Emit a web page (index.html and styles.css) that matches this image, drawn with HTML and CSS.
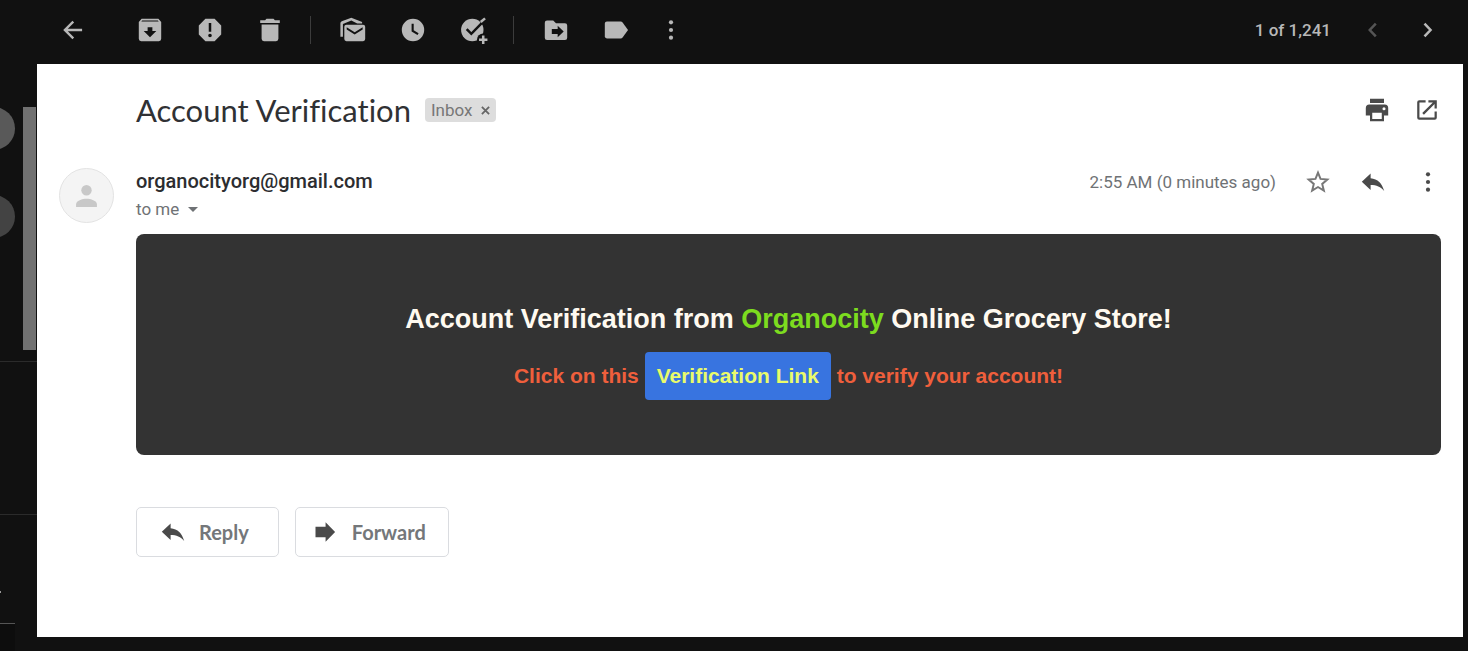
FILE: index.html
```html
<!DOCTYPE html>
<html lang="en">
<head>
<meta charset="utf-8">
<title>Account Verification</title>
<link rel="stylesheet" href="styles.css">
</head>
<body>
<div class="app">
  <header class="toolbar">
    <button class="tool tool-back" aria-label="Back"><svg class="icon" viewBox="0 0 20 20"><path d="M16.500 9.100H6.300l4.500-4.500-1.200-1.200L3 10l6.600 6.600 1.200-1.200-4.500-4.500h10.200z"/></svg></button>
    <button class="tool" aria-label="Archive"><svg class="icon" viewBox="0 0 20 20"><path fill-rule="evenodd" d="M4 2h12l2 2.200V16.300a1.700 1.700 0 0 1-1.700 1.700H3.700A1.700 1.700 0 0 1 2 16.300V4.200zM4.400 3.200L3.800 4h12.400l-.6-.8zM8.300 8v2.800H5.500l4.500 4.400 4.500-4.400h-2.800V8z"/></svg></button>
    <button class="tool" aria-label="Report spam"><svg class="icon" viewBox="0 0 20 20"><path fill-rule="evenodd" d="M6.700 2h6.600L18 6.700v6.600L13.300 18H6.700L2 13.300V6.700zM9.100 5v6.200h1.800V5zM10 12.600a1.300 1.300 0 1 0 0 2.600 1.300 1.300 0 0 0 0-2.600z"/></svg></button>
    <button class="tool" aria-label="Delete"><svg class="icon" viewBox="0 0 20 20"><path d="M7.500 2h5l1 1H17v2H3V3h3.500zM4 6h12v10.300a1.700 1.700 0 0 1-1.700 1.700H5.700A1.700 1.700 0 0 1 4 16.300z"/></svg></button>
    <span class="divider"></span>
    <button class="tool" aria-label="Mark as unread"><svg class="icon" viewBox="0 0 20 20"><path d="M1 14.800V5.500c0-.8.300-1.300 1-1.700l6.800-2.600 7.700 3v1.200H13L8.800 3.200 2.800 5.700v9.100z"/><path fill-rule="evenodd" d="M5.300 6.200h11.900a1.500 1.500 0 0 1 1.500 1.500v8.800a1.500 1.500 0 0 1-1.500 1.500H5.300a1.500 1.500 0 0 1-1.500-1.500V7.700a1.500 1.500 0 0 1 1.500-1.500zM5.500 8v1.700l5.700 3.500 5.700-3.500V8l-5.700 3.600z"/></svg></button>
    <button class="tool" aria-label="Snooze"><svg class="icon" viewBox="0 0 20 20"><path fill-rule="evenodd" d="M10 2a8 8 0 1 0 0 16 8 8 0 0 0 0-16zM9 5.500h1.500v4.700l3.500 2.100-.8 1.300L9 11z"/></svg></button>
    <button class="tool" aria-label="Add to tasks"><svg class="icon" viewBox="0 0 20 20"><circle cx="9.500" cy="10" r="8"/><path class="cut" d="M5.500 9.300l3.300 3.400 9-9.200"/><path class="stroke" d="M15.500 4.300l3.100-2.600"/><circle class="hole" cx="17.300" cy="17" r="4.500"/><path d="M16.400 14h1.800v2.100h2.100v1.800h-2.100V20h-1.800v-2.100h-2.100v-1.800h2.100z"/></svg></button>
    <span class="divider"></span>
    <button class="tool" aria-label="Move to"><svg class="icon" viewBox="0 0 20 20"><path fill-rule="evenodd" d="M3.600 3.200H8l2 2h6.400A1.600 1.600 0 0 1 18 6.800v8.700a1.600 1.600 0 0 1-1.600 1.600H3.600A1.600 1.600 0 0 1 2 15.500V4.800a1.600 1.600 0 0 1 1.600-1.600zM7 9.300v3.600h4.200v2.300l4.300-4.100L11.200 7v2.300z"/></svg></button>
    <button class="tool" aria-label="Labels"><svg class="icon" viewBox="0 0 20 20"><path d="M3.500 4h9.800c.6 0 1.100.3 1.400.7L18.600 10l-3.900 5.300c-.3.400-.8.700-1.400.7H3.500A1.500 1.500 0 0 1 2 14.500v-9A1.500 1.500 0 0 1 3.500 4z"/></svg></button>
    <button class="tool tool-more" aria-label="More"><svg class="icon" viewBox="0 0 20 20"><circle cx="10" cy="4.500" r="1.500"/><circle cx="10" cy="10" r="1.500"/><circle cx="10" cy="15.500" r="1.500"/></svg></button>
    <span class="count">1 of 1,241</span>
    <button class="tool tool-page" aria-label="Newer" disabled><svg class="icon" viewBox="0 0 20 20"><path class="stroke" d="M12 5.500L7.700 10l4.300 4.500"/></svg></button>
    <button class="tool tool-page" aria-label="Older"><svg class="icon" viewBox="0 0 20 20"><path class="stroke" d="M7.500 5.500l4.300 4.500-4.300 4.500"/></svg></button>
  </header>

  <aside class="rail">
    <div class="rail-chats">
      <div class="contacts"><span class="contact"></span><span class="contact contact-dim"></span></div>
      <div class="scrollbar"></div>
    </div>
    <div class="rail-section"></div>
    <div class="rail-footer"><span class="speck"></span></div>
    <div class="rail-tab"></div>
  </aside>

  <main class="mail">
    <div class="subject-row">
      <h1 class="subject">Account Verification</h1>
      <span class="chip">Inbox <button class="chip-close" aria-label="Remove label Inbox"><svg viewBox="0 0 10 10"><path d="M1 1l8 8M9 1L1 9"/></svg></button></span>
      <div class="actions">
        <button class="action" aria-label="Print"><svg class="icon" viewBox="0 0 20 20"><path fill-rule="evenodd" d="M5 2h10v3H5zM4.500 6h11A2.500 2.500 0 0 1 18 8.500V14h-3v4H5v-4H2V8.500A2.500 2.500 0 0 1 4.500 6zM6.600 12v4.400h6.800V12zM15 8a1.100 1.100 0 1 0 0 2.200A1.100 1.100 0 0 0 15 8z"/></svg></button>
        <button class="action" aria-label="Open in new window"><svg class="icon" viewBox="0 0 20 20"><path d="M9 3v1.600H4.600v10.800h10.800V11H17v4.500a1.500 1.500 0 0 1-1.500 1.500h-11A1.500 1.500 0 0 1 3 15.500v-11A1.500 1.500 0 0 1 4.500 3zM11 3h6v6h-1.600V5.800l-7.600 7.600-1.200-1.200 7.600-7.600H11z"/></svg></button>
      </div>
    </div>

    <div class="message">
      <div class="avatar"><svg viewBox="0 0 24 24"><circle cx="12" cy="7" r="5"/><path d="M2 23v-2.500C2 17 8 15.200 12 15.200S22 17 22 20.500V23z"/></svg></div>
      <div class="message-main">
        <div class="message-head">
          <div class="from">
            <h2 class="sender">organocityorg@gmail.com</h2>
            <button class="recipient">to me <svg viewBox="0 0 10 5"><path d="M0 0h10L5 5z"/></svg></button>
          </div>
          <div class="meta">
            <span class="time">2:55 AM (0 minutes ago)</span>
            <button class="action" aria-label="Star"><svg class="icon star" viewBox="0 0 20 20"><path d="M10 3.300l1.800 4.500 4.900.4-3.700 3.200 1.200 4.800-4.200-2.600-4.200 2.600L7 11.400 3.300 8.200l4.900-.4z"/></svg></button>
            <button class="action" aria-label="Reply"><svg class="icon" viewBox="0 0 20 20"><path d="M8.300 4v3.300c5 .5 8.300 3.700 9.700 9.200-2.500-3-5.500-4.300-9.700-4.300v3.600L2 9.900z"/></svg></button>
            <button class="action" aria-label="More"><svg class="icon" viewBox="0 0 20 20"><circle cx="10" cy="4.500" r="1.500"/><circle cx="10" cy="10" r="1.500"/><circle cx="10" cy="15.500" r="1.500"/></svg></button>
          </div>
        </div>
        <section class="banner">
          <h3 class="banner-title">Account Verification from <span class="brand">Organocity</span> Online Grocery Store!</h3>
          <p class="banner-text">Click on this <a class="verify" href="#verify">Verification Link</a> to verify your account!</p>
        </section>
        <div class="replies">
          <button class="reply"><svg class="icon" viewBox="0 0 20 20"><path d="M8.300 4v3.300c5 .5 8.300 3.700 9.700 9.200-2.500-3-5.500-4.300-9.700-4.300v3.600L2 9.900z"/></svg>Reply</button>
          <button class="reply reply-forward"><svg class="icon" viewBox="0 0 20 20"><path d="M2.500 6.200h7.200V3l6.800 7-6.800 7v-3.200H2.500z"/></svg>Forward</button>
        </div>
      </div>
    </div>
  </main>
</div>
</body>
</html>
```
FILE: styles.css
```css
* { box-sizing: border-box; }
body {
  margin: 0;
  background: #111;
  font-family: Roboto, "Liberation Sans", sans-serif;
}
h1, h2, h3, p { margin: 0; }
button {
  padding: 0;
  border: 0;
  background: none;
  color: inherit;
  font: inherit;
}
svg { display: block; fill: currentColor; }
.icon { width: 28px; height: 28px; overflow: visible; }
.stroke { fill: none; stroke: currentColor; stroke-width: 1.8; }
.cut { fill: none; stroke: #111; stroke-width: 1.8; }
.hole { fill: #111; }

.app {
  display: grid;
  grid-template: auto 1fr / 37px 1fr;
  min-height: 100vh;
  padding: 0 5px 14px 0;
}

.toolbar {
  grid-column: 1 / -1;
  display: flex;
  align-items: center;
  height: 64px;
  padding: 0 8px 4px 43px;
  color: #b8b8b8;
}
.tool { display: flex; justify-content: center; width: 60px; }
.tool-back { margin-right: 17px; }
.tool-more { width: 50px; }
.tool-page { width: 55px; }
.tool-page:disabled { color: #555; }
.divider { width: 1px; height: 28px; margin: 0 12px 0 10px; background: #3c3c3c; }
.count { margin: 0 14px 0 auto; font-size: 17px; font-weight: 500; }

.rail { display: flex; flex-direction: column; overflow: hidden; margin-bottom: -14px; }
.rail-chats {
  display: flex;
  justify-content: space-between;
  padding: 43px 1px 11px 0;
  border-bottom: 1px solid #2b2b2b;
}
.contacts { display: flex; flex-direction: column; gap: 45px; }
.contact { width: 43px; height: 43px; margin-left: -28px; border-radius: 50%; background: #595959; }
.contact-dim { background: #434343; }
.scrollbar { width: 13px; height: 243px; background: #717171; }
.rail-section { height: 152px; }
.rail-footer { flex: 1; padding-top: 76px; border-top: 1px solid #2b2b2b; }
.speck { display: block; width: 1px; height: 2px; background: #999; }
.rail-tab { width: 15px; height: 28px; border-top: 1px solid #555; background: #0d0d0d; }

.mail { padding: 28px 22px 28px; background: #fff; color: #4a4a4a; }
.subject-row { display: flex; align-items: center; padding-left: 77px; }
.subject {
  color: #303134;
  font: 400 31px/36px Lato, sans-serif;
  font-variant-ligatures: none;
}
.chip {
  display: flex;
  align-items: center;
  gap: 8px;
  height: 24px;
  margin-left: 14px;
  padding: 0 6px;
  border-radius: 4px;
  background: #ddd;
  color: #777;
  font-size: 17px;
}
.chip-close svg { width: 9px; height: 9px; stroke: #666; stroke-width: 2; }
.actions { display: flex; margin-left: auto; }
.action { display: flex; justify-content: center; width: 55px; }
.actions .action { width: 50px; }
.actions { margin-right: -11px; }
.meta { margin-right: -14px; }

.message { display: flex; gap: 22px; padding-top: 40px; }
.avatar {
  display: flex;
  align-items: center;
  justify-content: center;
  flex: none;
  width: 55px;
  height: 55px;
  border: 1px solid #e3e3e3;
  border-radius: 50%;
  background: #f4f4f4;
  color: #c8c8c8;
}
.avatar svg { width: 25px; height: 25px; }
.message-main { flex: 1; }
.message-head { display: flex; justify-content: space-between; align-items: flex-start; }
.sender { color: #2c2d30; font-size: 20px; line-height: 26px; font-weight: 500; }
.recipient { display: flex; align-items: center; gap: 9px; color: #6f7275; font-size: 17px; line-height: 30px; }
.recipient svg { width: 10px; height: 5px; }
.meta { display: flex; align-items: center; color: #4a4a4a; }
.time { margin-right: 14px; color: #6f7275; font-size: 17px; }
.star { fill: none; stroke: #777; stroke-width: 1.4; }

.banner {
  margin-top: 10px;
  padding: 68px 24px 55px;
  border-radius: 8px;
  background: #333;
  color: #fffaf0;
  font-family: "Liberation Sans", Arial, sans-serif;
  font-weight: 700;
  text-align: center;
}
.banner-title { font-size: 27px; line-height: 34px; }
.brand { color: #7ddc1f; }
.banner-text { padding-top: 16px; color: #ef5f3c; font-size: 21px; line-height: 48px; }
.verify {
  display: inline-block;
  padding: 0 12px;
  border-radius: 4px;
  background: #3874e0;
  color: #e9fb6a;
  text-decoration: none;
}

.replies { display: flex; gap: 16px; margin-top: 52px; }
.reply {
  display: flex;
  align-items: center;
  gap: 12px;
  height: 50px;
  padding: 0 29px 0 22px;
  border: 1px solid #dadce0;
  border-radius: 5px;
  color: #74777a;
  font: 700 20px Lato, sans-serif;
}
.reply-forward { padding: 0 22px 0 16px; }
.reply .icon { color: #4a4a4a; }
```
